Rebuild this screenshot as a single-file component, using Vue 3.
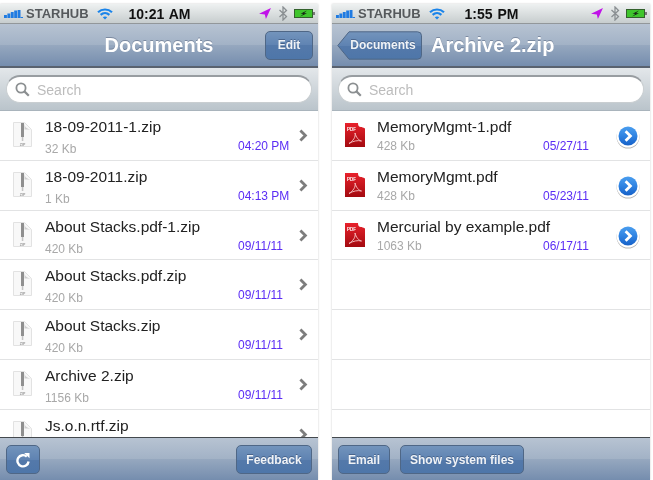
<script setup>
const phones = [
  {
    time: '10:21 AM', title: 'Documents', kind: 'zip',
    rows: [
      ['18-09-2011-1.zip', '32 Kb', '04:20 PM'],
      ['18-09-2011.zip', '1 Kb', '04:13 PM'],
      ['About Stacks.pdf-1.zip', '420 Kb', '09/11/11'],
      ['About Stacks.pdf.zip', '420 Kb', '09/11/11'],
      ['About Stacks.zip', '420 Kb', '09/11/11'],
      ['Archive 2.zip', '1156 Kb', '09/11/11'],
      ['Js.o.n.rtf.zip', '', ''],
    ],
  },
  {
    time: '1:55 PM', title: 'Archive 2.zip', kind: 'pdf', back: 'Documents',
    rows: [
      ['MemoryMgmt-1.pdf', '428 Kb', '05/27/11'],
      ['MemoryMgmt.pdf', '428 Kb', '05/23/11'],
      ['Mercurial by example.pdf', '1063 Kb', '06/17/11'],
      ['', '', ''],
      ['', '', ''],
      ['', '', ''],
    ],
  },
]
const signal = [[0, 5, 3], [3.4, 3.5, 4.5], [6.8, 2, 6], [10.2, .5, 7.5], [13.6, 0, 8]]
</script>

<template>
  <main class="page">
    <section v-for="p in phones" :key="p.title" class="phone" :class="p.kind">
      <header class="status">
        <div class="status-left">
          <svg class="signal" width="19" height="8" viewBox="0 0 19 8">
            <rect v-for="(s, i) in signal" :key="i" :x="s[0]" :y="s[1]" width="2.9" :height="s[2]" fill="#1f7be2" />
            <rect x="16.500" y="7" width="2.500" height="1" fill="#1f7be2" />
          </svg>
          <span class="carrier">STARHUB</span>
          <svg class="wifi" width="16" height="12" viewBox="0 0 16 12" fill="none" stroke="#1a84ea" stroke-width="2.200">
            <path d="M1 4.200C5 .6 11 .6 15 4.200" />
            <path d="M3.600 6.800C6.200 4.600 9.800 4.600 12.400 6.800" />
            <path d="M8 11.600 5.800 9.200C7 8.200 9 8.200 10.200 9.200Z" fill="#1a84ea" stroke="none" />
          </svg>
        </div>
        <span class="clock">{{ p.time }}</span>
        <div class="status-right">
          <svg class="arrow" width="12" height="11" viewBox="0 0 13 12"><path d="M13 0 0 6.300l6.300.7 1.200 5Z" fill="#c012e8" /></svg>
          <svg width="10" height="15" viewBox="0 0 9 15" fill="none" stroke="#8a8f92" stroke-width="1.300"><path d="M1 4l7 6.500-3.500 3.500V1L8 4.500 1 11" /></svg>
          <svg width="21" height="9" viewBox="0 0 21 9">
            <rect x=".5" y=".5" width="18" height="8" fill="#3fc52c" stroke="#33612c" />
            <rect x="19" y="3" width="2" height="3" fill="#777" />
            <path d="M13 1.600 6.500 4.800h3.200L6 7.500l7-3.200H9.800Z" fill="#111" />
          </svg>
        </div>
      </header>

      <nav class="nav" :class="{ 'nav-back': p.back }">
        <button v-if="p.back" class="bar-btn back">
          <svg class="back-shape" viewBox="0 0 85 29" preserveAspectRatio="none">
            <defs>
              <linearGradient id="bk" x1="0" y1="0" x2="0" y2="1">
                <stop offset="0" stop-color="#7394bc" />
                <stop offset=".5" stop-color="#5f83b2" />
                <stop offset=".5" stop-color="#5479aa" />
                <stop offset="1" stop-color="#4e76a9" />
              </linearGradient>
            </defs>
            <path d="M.8 14.500 12 .8h68.500a4 4 0 0 1 4 4v19.400a4 4 0 0 1-4 4H12Z" fill="url(#bk)" stroke="#4f6786" />
          </svg>
          <span>{{ p.back }}</span>
        </button>
        <span v-else></span>
        <h1>{{ p.title }}</h1>
        <button v-if="!p.back" class="bar-btn edit">Edit</button>
      </nav>

      <div class="searchbar">
        <div class="searchbox">
          <svg width="15" height="15" viewBox="0 0 15 15" fill="none" stroke="#8b8f91" stroke-width="1.800">
            <circle cx="6" cy="6" r="4.600" />
            <path d="m9.400 9.400 4.400 4.400" stroke-width="2.200" />
          </svg>
          <span>Search</span>
        </div>
      </div>

      <div class="list">
        <div v-for="(r, i) in p.rows" :key="i" class="row">
          <template v-if="r[0]">
            <svg v-if="p.kind === 'zip'" class="file" width="19" height="25" viewBox="0 0 19 25">
              <path d="M.5.5h11l7 7v17H.5Z" fill="#f8f8f8" stroke="#e2e2e2" />
              <path d="M11.500.5c0 4 1 6.500 7 7h-7Z" fill="#cfcfcf" />
              <rect x="8" y="1" width="3" height="14" fill="#8f8f8f" />
              <rect x="8.800" y="15" width="1.500" height="4" fill="#c4c4c4" />
              <text x="9.500" y="23.500" text-anchor="middle" class="zip-label">ZIP</text>
            </svg>
            <svg v-else class="file" width="20" height="24" viewBox="0 0 20 24">
              <defs>
                <linearGradient id="pdf" x1="0" y1="0" x2="0" y2="1">
                  <stop offset="0" stop-color="#e8222c" />
                  <stop offset="1" stop-color="#a30a10" />
                </linearGradient>
              </defs>
              <path d="M0 0h13c0 2.500.8 4 3 4 1 0 2 .5 4 1.500V24H0Z" fill="url(#pdf)" />
              <text x="2" y="7.500" class="pdf-label">PDF</text>
              <path d="M10 10c1 4-2 8-6 10.500 4-2.500 9-3.500 12.500-2.500-3-.500-5.500-4-6.500-8Z" fill="none" stroke="#f7c4c4" stroke-width=".9" />
            </svg>
            <div class="text">
              <div class="name">{{ r[0] }}</div>
              <div class="meta">
                <span class="size">{{ r[1] }}</span>
                <span class="date">{{ r[2] }}</span>
              </div>
            </div>
            <svg v-if="p.kind === 'zip'" class="chev" width="9" height="13" viewBox="0 0 9 13" fill="none" stroke="#7d7d7d" stroke-width="2.800">
              <path d="m1.400 1.400 5 5-5 5" />
            </svg>
            <svg v-else class="disc" width="24" height="25" viewBox="0 0 24 25">
              <defs>
                <linearGradient id="disc" x1="0" y1="0" x2="0" y2="1">
                  <stop offset="0" stop-color="#4a9eef" />
                  <stop offset=".5" stop-color="#2f83e2" />
                  <stop offset="1" stop-color="#1560c8" />
                </linearGradient>
              </defs>
              <circle cx="12" cy="13" r="11.500" fill="#b5b5b5" />
              <circle cx="12" cy="12" r="11.500" fill="#fff" />
              <circle cx="12" cy="12" r="9.500" fill="url(#disc)" />
              <path d="m9.600 7.200 4.800 4.800-4.800 4.800" fill="none" stroke="#fff" stroke-width="2.800" />
            </svg>
          </template>
        </div>
      </div>

      <footer class="toolbar">
        <template v-if="!p.back">
          <button class="bar-btn refresh" aria-label="Refresh">
            <svg width="16" height="16" viewBox="0 0 16 16" fill="none" stroke="#fff" stroke-width="2.400">
              <path d="M11.800 4.600A5.600 5.600 0 1 0 13.600 9.500" />
              <path d="M9.200 1h5.300v5.300Z" fill="#fff" stroke="none" />
            </svg>
          </button>
          <button class="bar-btn feedback">Feedback</button>
        </template>
        <template v-else>
          <button class="bar-btn email">Email</button>
          <button class="bar-btn system">Show system files</button>
        </template>
      </footer>
    </section>
  </main>
</template>

<style scoped>
.page {
  display: flex;
  gap: 14px;
  width: 653px;
  height: 480px;
  padding-top: 4px;
  box-sizing: border-box;
  background: #fff;
  overflow: hidden;
  font-family: "Liberation Sans", Arial, sans-serif;
  filter: blur(.4px);
}
.phone {
  width: 318px;
  height: 476px;
  display: flex;
  flex-direction: column;
  box-shadow: 0 0 2px rgba(0, 0, 0, .2);
}
.status {
  height: 19px;
  flex: none;
  display: grid;
  grid-template-columns: 1fr auto 1fr;
  align-items: center;
  padding: 0 3px 0 4px;
  background: linear-gradient(#eef1f1, #c7cdce);
  border-bottom: 1px solid #92979a;
}
.status-left, .status-right { display: flex; align-items: center; }
.status-left { gap: 3px; }
.wifi { margin-left: 5px; }
.status-right { justify-content: flex-end; gap: 6px; }
.arrow { margin-right: 1px; }
.carrier { font-size: 13px; font-weight: 700; color: #55595c; }
.clock { font-size: 14px; font-weight: 700; color: #111; word-spacing: 1px; }
.nav {
  height: 42px;
  flex: none;
  display: grid;
  grid-template-columns: 1fr auto 1fr;
  align-items: center;
  padding: 0 5px;
  background: linear-gradient(#b7c3d2 0, #a2b2c6 50%, #96a8bf 50%, #758dae 100%);
  border-bottom: 2px solid #59626f;
}
.nav-back { display: flex; gap: 9px; }
.nav h1 {
  margin: 0;
  font-size: 20px;
  font-weight: 700;
  color: #fff;
  text-shadow: 0 -1px 0 rgba(70, 85, 110, .45);
}
.bar-btn {
  height: 29px;
  padding: 0;
  box-sizing: border-box;
  border: 1px solid #4f6786;
  border-radius: 5px;
  background: linear-gradient(#7394bc 0, #5f83b2 50%, #5479aa 50%, #4e76a9 100%);
  color: #f0f3f7;
  font: 700 12px "Liberation Sans", Arial, sans-serif;
  text-shadow: 0 -1px 0 rgba(30, 45, 75, .4);
  display: flex;
  align-items: center;
  justify-content: center;
}
.edit { width: 48px; justify-self: end; }
.back {
  position: relative;
  width: 85px;
  border: 0;
  background: none;
  padding-left: 7px;
}
.back span { position: relative; }
.back-shape { position: absolute; inset: 0; width: 100%; height: 100%; }
.searchbar {
  height: 43px;
  flex: none;
  padding: 7px 6px 0;
  box-sizing: border-box;
  background: linear-gradient(#e3e7ea, #bac4cb);
  border-bottom: 1px solid #a9b4bc;
}
.searchbox {
  height: 28px;
  box-sizing: border-box;
  border-radius: 14px;
  background: #fff;
  border: 1px solid #c9ced1;
  border-top: 2px solid #989da1;
  display: flex;
  align-items: center;
  gap: 7px;
  padding-left: 8px;
}
.searchbox span { font-size: 14px; color: #bcbcbc; }
.list {
  flex: 1;
  min-height: 0;
  overflow: hidden;
  background: #fff;
}
.row {
  height: 49.800px;
  box-sizing: border-box;
  border-bottom: 1px solid #e2e3e4;
  display: flex;
  align-items: flex-start;
}
.file { flex: none; margin: 11px 0 0 13px; }
.pdf .file { margin-top: 12px; }
.zip-label { font: 700 3.500px "Liberation Sans", Arial, sans-serif; fill: #999; }
.pdf-label { font: 700 4.500px "Liberation Sans", Arial, sans-serif; fill: #fff; }
.text { flex: 1; min-width: 0; margin-left: 13px; padding-top: 7px; }
.pdf .text { margin-left: 12px; }
.name { font-size: 15.500px; line-height: 18px; color: #222; white-space: nowrap; }
.meta { display: flex; justify-content: space-between; margin-top: 6px; height: 15px; }
.pdf .meta { margin-top: 3px; }
.size { font-size: 12px; line-height: 15px; color: #a8a8a8; }
.date { width: 52px; font-size: 12px; line-height: 15px; color: #5a2cf5; margin-top: -3px; }
.pdf .date { margin-top: 0; margin-right: 15px; }
.chev { flex: none; margin: 18px 10px 0 9px; }
.disc { flex: none; margin: 13px 10px 0 6px; }
.toolbar {
  height: 43px;
  flex: none;
  box-sizing: border-box;
  display: flex;
  align-items: flex-start;
  padding: 7px 6px 0;
  gap: 10px;
  background: linear-gradient(#b7c3d2 0, #a2b2c6 50%, #96a8bf 50%, #758dae 100%);
  border-top: 1px solid #44494e;
}
.refresh { width: 34px; }
.feedback { width: 76px; margin-left: auto; }
.email { width: 52px; }
.system { width: 124px; }
</style>
